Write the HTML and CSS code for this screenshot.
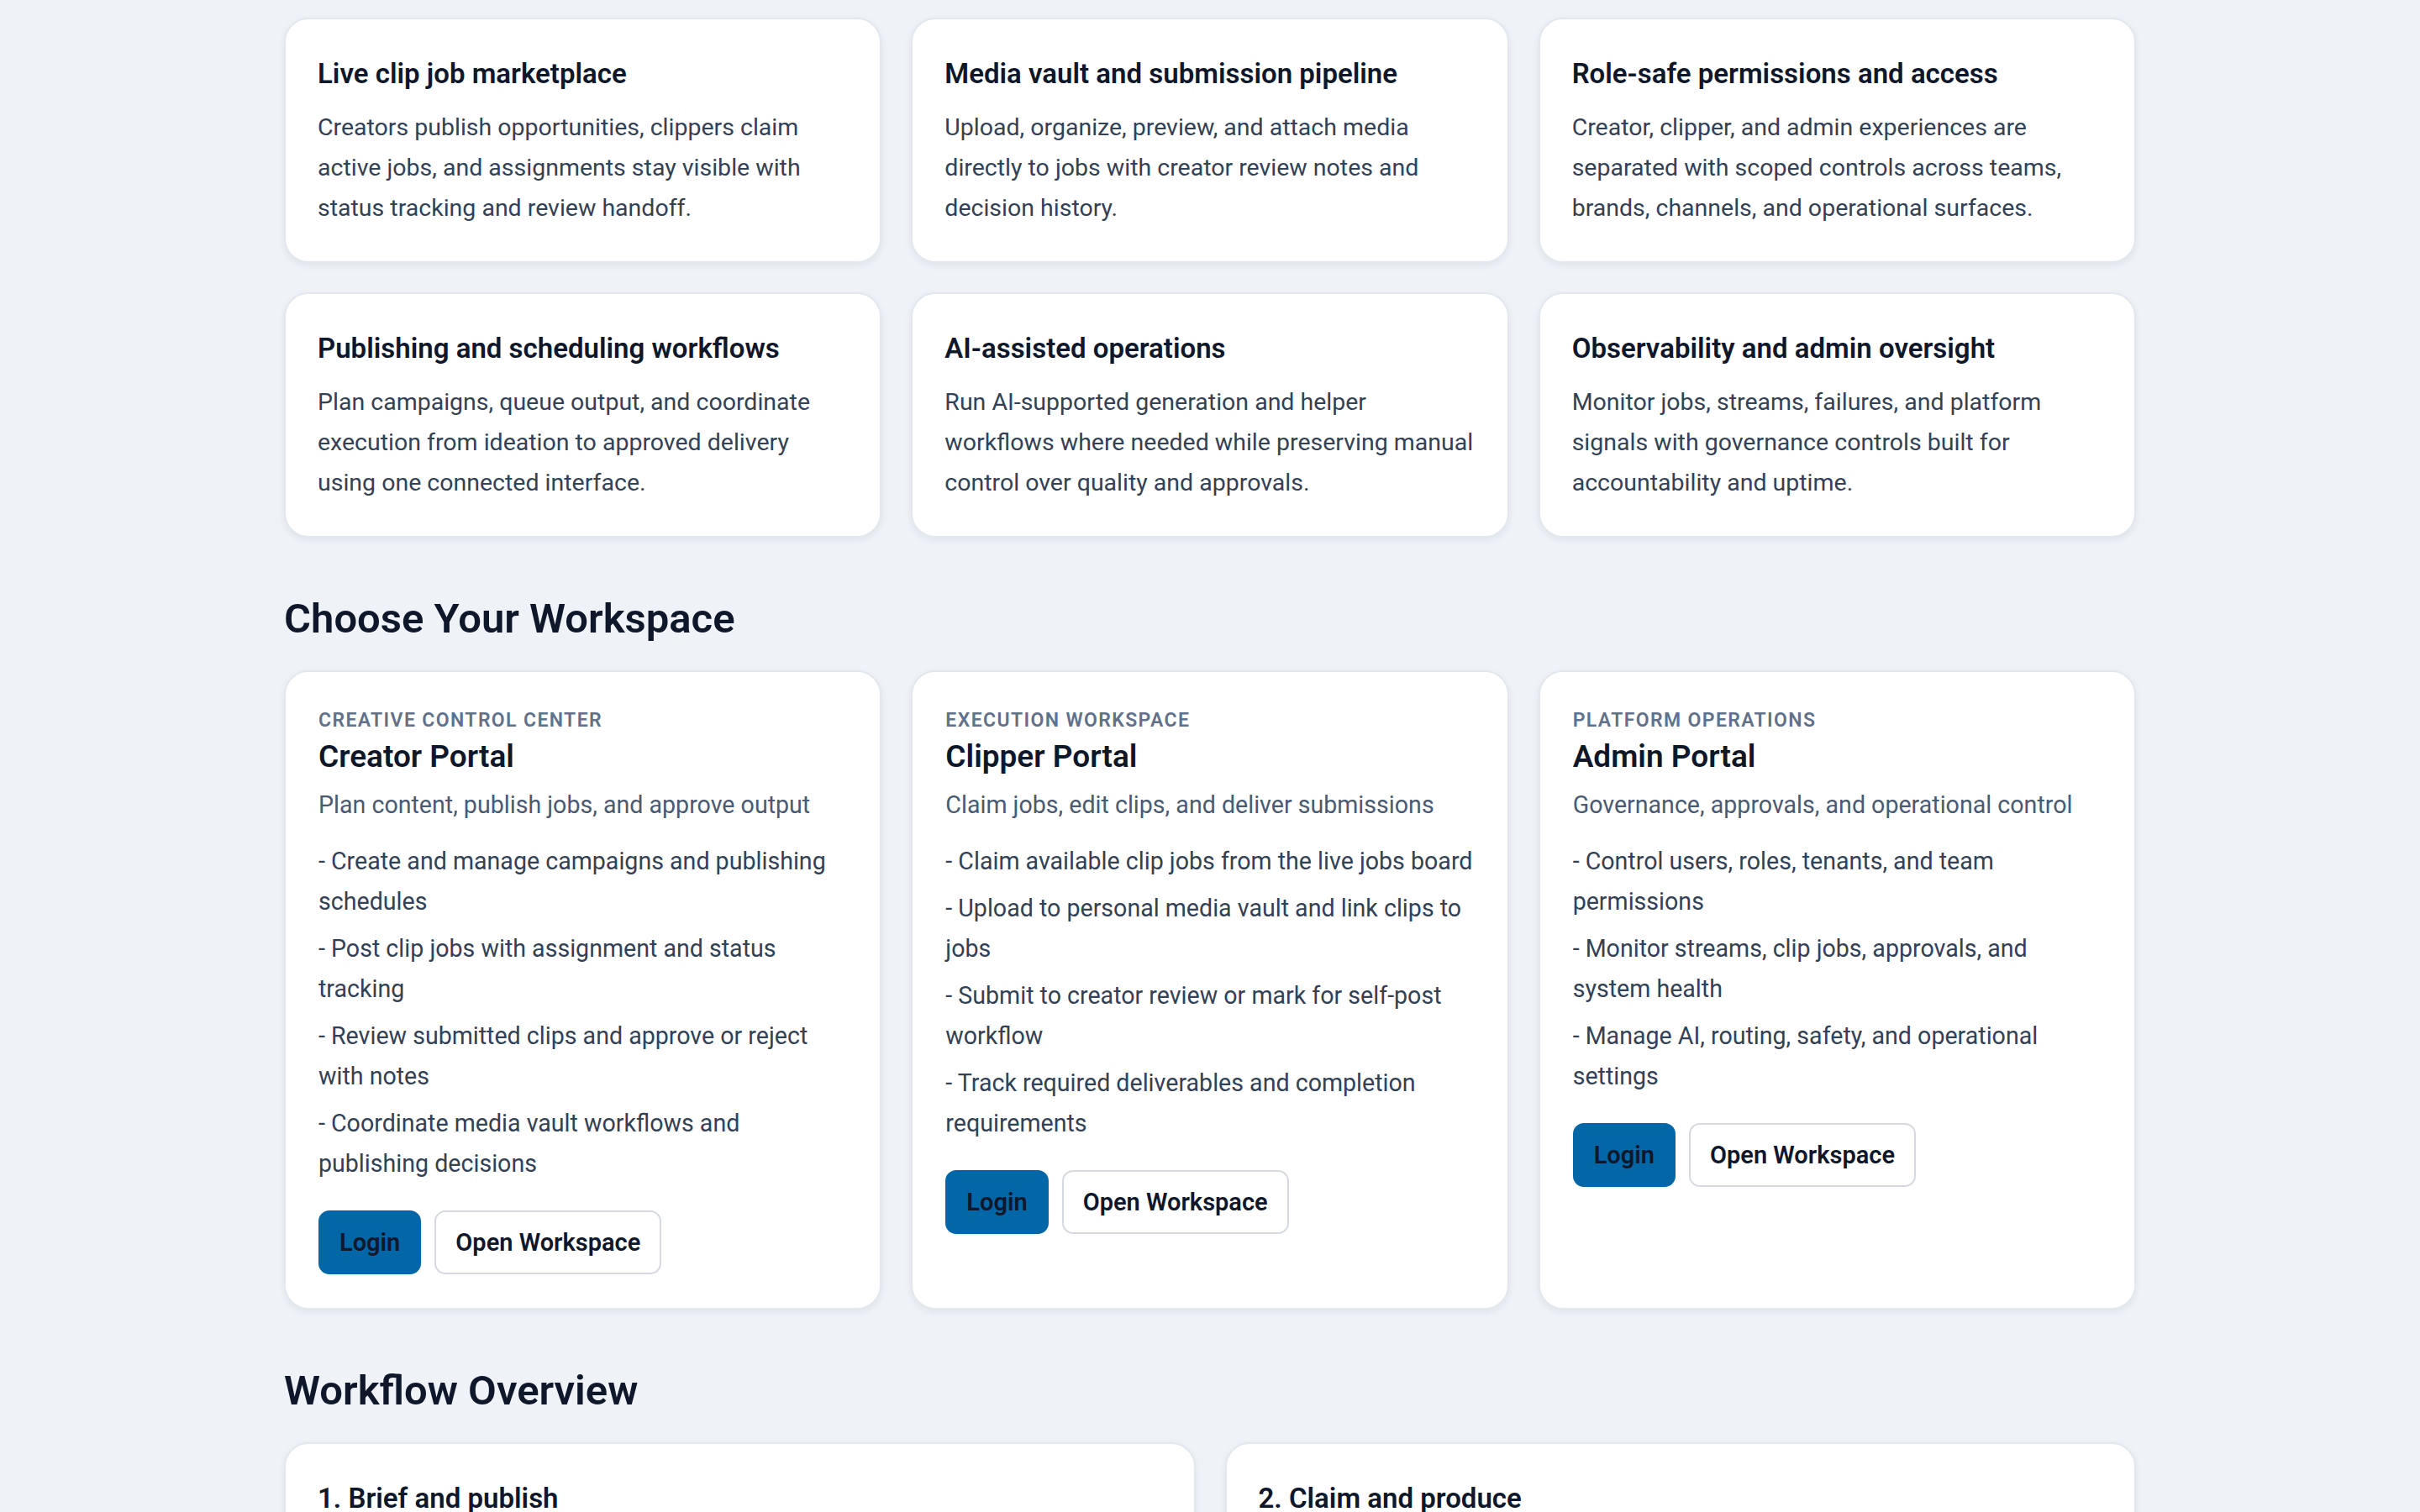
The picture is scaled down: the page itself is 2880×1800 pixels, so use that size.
FILE: index.html
```html
<!DOCTYPE html>
<html lang="en">
	<head>
		<meta charset="utf-8" />
		<title>ClipOps - Workspaces</title>
		<link rel="stylesheet" href="styles.css">
	</head>
	<body>
		<main class="page">

			<!-- platform capabilities -->
			<section class="grid grid-3">
				<article class="card feature">
					<h3>Live clip job marketplace</h3>
					<p>Creators publish opportunities, clippers claim active jobs, and assignments stay visible with status tracking and review handoff.</p>
				</article>
				<article class="card feature">
					<h3>Media vault and submission pipeline</h3>
					<p>Upload, organize, preview, and attach media directly to jobs with creator review notes and decision history.</p>
				</article>
				<article class="card feature">
					<h3>Role-safe permissions and access</h3>
					<p>Creator, clipper, and admin experiences are separated with scoped controls across teams, brands, channels, and operational surfaces.</p>
				</article>
				<article class="card feature">
					<h3>Publishing and scheduling workflows</h3>
					<p>Plan campaigns, queue output, and coordinate execution from ideation to approved delivery using one connected interface.</p>
				</article>
				<article class="card feature">
					<h3>AI-assisted operations</h3>
					<p>Run AI-supported generation and helper workflows where needed while preserving manual control over quality and approvals.</p>
				</article>
				<article class="card feature">
					<h3>Observability and admin oversight</h3>
					<p>Monitor jobs, streams, failures, and platform signals with governance controls built for accountability and uptime.</p>
				</article>
			</section>

			<!-- portals -->
			<h2 class="section-title">Choose Your Workspace</h2>
			<section class="grid grid-3">
				<article class="card portal">
					<p class="eyebrow">Creative Control Center</p>
					<h3>Creator Portal</h3>
					<p class="lead">Plan content, publish jobs, and approve output</p>
					<ul>
						<li>- Create and manage campaigns and publishing schedules</li>
						<li>- Post clip jobs with assignment and status tracking</li>
						<li>- Review submitted clips and approve or reject with notes</li>
						<li>- Coordinate media vault workflows and publishing decisions</li>
					</ul>
					<div class="actions">
						<a class="btn btn-primary" href="#">Login</a>
						<a class="btn btn-outline" href="#">Open Workspace</a>
					</div>
				</article>
				<article class="card portal">
					<p class="eyebrow">Execution Workspace</p>
					<h3>Clipper Portal</h3>
					<p class="lead">Claim jobs, edit clips, and deliver submissions</p>
					<ul>
						<li>- Claim available clip jobs from the live jobs board</li>
						<li>- Upload to personal media vault and link clips to jobs</li>
						<li>- Submit to creator review or mark for self-post workflow</li>
						<li>- Track required deliverables and completion requirements</li>
					</ul>
					<div class="actions">
						<a class="btn btn-primary" href="#">Login</a>
						<a class="btn btn-outline" href="#">Open Workspace</a>
					</div>
				</article>
				<article class="card portal">
					<p class="eyebrow">Platform Operations</p>
					<h3>Admin Portal</h3>
					<p class="lead">Governance, approvals, and operational control</p>
					<ul>
						<li>- Control users, roles, tenants, and team permissions</li>
						<li>- Monitor streams, clip jobs, approvals, and system health</li>
						<li>- Manage AI, routing, safety, and operational settings</li>
					</ul>
					<div class="actions">
						<a class="btn btn-primary" href="#">Login</a>
						<a class="btn btn-outline" href="#">Open Workspace</a>
					</div>
				</article>
			</section>

			<!-- how the work moves -->
			<h2 class="section-title">Workflow Overview</h2>
			<section class="grid grid-2">
				<article class="card feature">
					<h3>1. Brief and publish</h3>
					<p>Creators set campaign goals, attach source media, and publish clip jobs with deliverables and deadlines.</p>
				</article>
				<article class="card feature">
					<h3>2. Claim and produce</h3>
					<p>Clippers claim open jobs, edit in their media vault, and submit finished clips for review.</p>
				</article>
			</section>

		</main>
	</body>
</html>
```

FILE: styles.css
```css
* {
	margin: 0;
	padding: 0;
	box-sizing: border-box;
}

body {
	background-color: #eff3f8;
	font-family: Roboto, "Liberation Sans", sans-serif;
	color: #0f172a;
}

a {
	text-decoration: none;
}

.page {
	max-width: 2204px;
	margin: 0 auto;
	padding: 21px 0 160px;
}

/* card grids */
.grid {
	display: grid;
	gap: 35px;
}

.grid-3 {
	grid-template-columns: repeat(3, 1fr);
}

.grid-2 {
	grid-template-columns: repeat(2, 1fr);
}

.card {
	background-color: #fff;
	border: 2px solid #e3e8ef;
	border-radius: 29px;
	box-shadow: 0 3px 8px rgba(15, 23, 42, 0.07);
}

.section-title {
	font-size: 49px;
	line-height: 58px;
	font-weight: 600;
	margin: 68px 0 32px;
}

/* feature cards */
.feature {
	padding: 44px 38px 39px;
}

.feature h3 {
	font-size: 33px;
	line-height: 42px;
	font-weight: 600;
	margin-bottom: 19px;
}

.feature p {
	font-size: 28.5px;
	line-height: 48px;
	color: #334155;
}

/* portal cards */
.portal {
	padding: 43px 39px 40px;
}

.eyebrow {
	font-size: 23px;
	line-height: 30px;
	font-weight: 600;
	letter-spacing: 0.06em;
	text-transform: uppercase;
	color: #61718a;
}

.portal h3 {
	font-size: 37px;
	line-height: 44px;
	font-weight: 600;
	margin-top: 6px;
}

.lead {
	font-size: 28.6px;
	line-height: 48px;
	color: #4a5a71;
	margin-top: 11px;
}

.portal ul {
	list-style: none;
	margin-top: 19px;
	display: flex;
	flex-direction: column;
	gap: 8px;
}

.portal li {
	font-size: 28.6px;
	line-height: 48px;
	color: #334155;
}

.actions {
	display: flex;
	gap: 16px;
	margin-top: 32px;
}

.btn {
	display: inline-block;
	font-size: 29px;
	line-height: 36px;
	font-weight: 600;
	padding: 18px 23px;
	border: 2px solid transparent;
	border-radius: 13px;
	color: #0f172a;
}

.btn-primary {
	background-color: #0366a6;
	border-color: #0366a6;
}

.btn-outline {
	background-color: #fff;
	border-color: #d6dae0;
}
```
